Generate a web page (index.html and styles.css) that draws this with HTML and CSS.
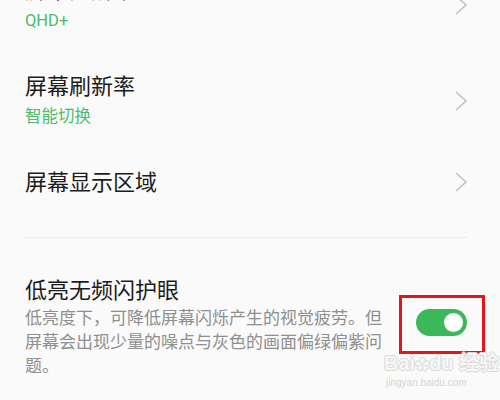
FILE: index.html
```html
<!DOCTYPE html>
<html lang="zh-CN">
<head>
    <meta charset="UTF-8">
    <meta name="viewport" content="width=device-width, initial-scale=1.0">
    <title>显示设置</title>
    <link rel="stylesheet" href="styles.css">
</head>
<body>
    <div class="settings">
        <div class="group">
            <div class="item">
                <div class="item-text">
                    <div class="item-title">屏幕分辨率</div>
                    <div class="item-value">QHD+</div>
                </div>
                <svg class="chevron" viewBox="0 0 12 20"><polyline points="1,1 11,10 1,19"/></svg>
            </div>

            <div class="item">
                <div class="item-text">
                    <div class="item-title">屏幕刷新率</div>
                    <div class="item-value">智能切换</div>
                </div>
                <svg class="chevron" viewBox="0 0 12 20"><polyline points="1,1 11,10 1,19"/></svg>
            </div>

            <div class="item item-single">
                <div class="item-text">
                    <div class="item-title">屏幕显示区域</div>
                </div>
                <svg class="chevron" viewBox="0 0 12 20"><polyline points="1,1 11,10 1,19"/></svg>
            </div>
        </div>

        <div class="switch-row">
            <div class="item-text">
                <div class="item-title">低亮无频闪护眼</div>
                <div class="item-desc">低亮度下，可降低屏幕闪烁产生的视觉疲劳。但屏幕会出现少量的噪点与灰色的画面偏绿偏紫问题。</div>
            </div>
            <div class="toggle on">
                <span class="knob"></span>
                <span class="mark"></span>
            </div>
        </div>
    </div>

    <div class="watermark">
        <div class="wm-logo">Bai<span class="wm-paw">&#10047;</span>du 经验</div>
        <div class="wm-url">jingyan.baidu.com</div>
    </div>
</body>
</html>
```

FILE: styles.css
```css
html, body {
    margin: 0;
    height: 100%;
    overflow: hidden;
}

body {
    background: #fafafa;
    font-family: Roboto, "Noto Sans CJK SC", sans-serif;
    color: #1c1c1c;
    position: relative;
}

.settings {
    padding: 0 33px 0 24px;
    margin-top: -40px;
}

.group {
    padding-bottom: 19px;
    border-bottom: 1px solid #ececec;
}

.item {
    display: flex;
    align-items: center;
    justify-content: space-between;
    padding: 16px 0 20px;
}

.item-title {
    font-size: 22px;
    line-height: 30px;
    padding-left: 1px;
}

.item-value {
    font-size: 16.5px;
    line-height: 30px;
    color: #4bba6b;
    padding-left: 1px;
}

.chevron {
    width: 12px;
    height: 20px;
    flex-shrink: 0;
    margin-bottom: 2px;
}

.chevron polyline {
    fill: none;
    stroke: #c2c2c2;
    stroke-width: 1.6;
}

.switch-row {
    display: flex;
    align-items: center;
    justify-content: space-between;
    padding-top: 38px;
}

.item-desc {
    font-size: 17px;
    line-height: 24px;
    color: #8f8f8f;
    max-width: 362px;
    padding-left: 1px;
}

.toggle {
    position: relative;
    width: 51px;
    height: 27px;
    border-radius: 14px;
    background: #3bb85a;
    flex-shrink: 0;
    margin-bottom: 9px;
}

.knob {
    position: absolute;
    top: 4px;
    right: 4px;
    width: 19px;
    height: 19px;
    border-radius: 50%;
    background: #fff;
}

/* red annotation box drawn over the screenshot */
.mark {
    position: absolute;
    left: -17px;
    top: -14px;
    width: 80px;
    height: 53px;
    border: 3px solid #e8141c;
}

.watermark {
    position: absolute;
    left: 384px;
    top: 352px;
    color: #f6f6f6;
    text-shadow: 1px 0 0 #dadada, -1px 0 0 #dadada, 0 1px 0 #dadada, 0 -1px 0 #dadada;
    font-family: "Liberation Sans", "Noto Sans CJK SC", sans-serif;
}

.wm-logo {
    font-size: 20px;
    font-weight: bold;
    line-height: 22px;
}

.wm-paw {
    font-size: 14px;
}

.wm-url {
    font-size: 10px;
    line-height: 14px;
    padding-left: 2px;
    color: #d4d4d4;
    text-shadow: none;
}
```
